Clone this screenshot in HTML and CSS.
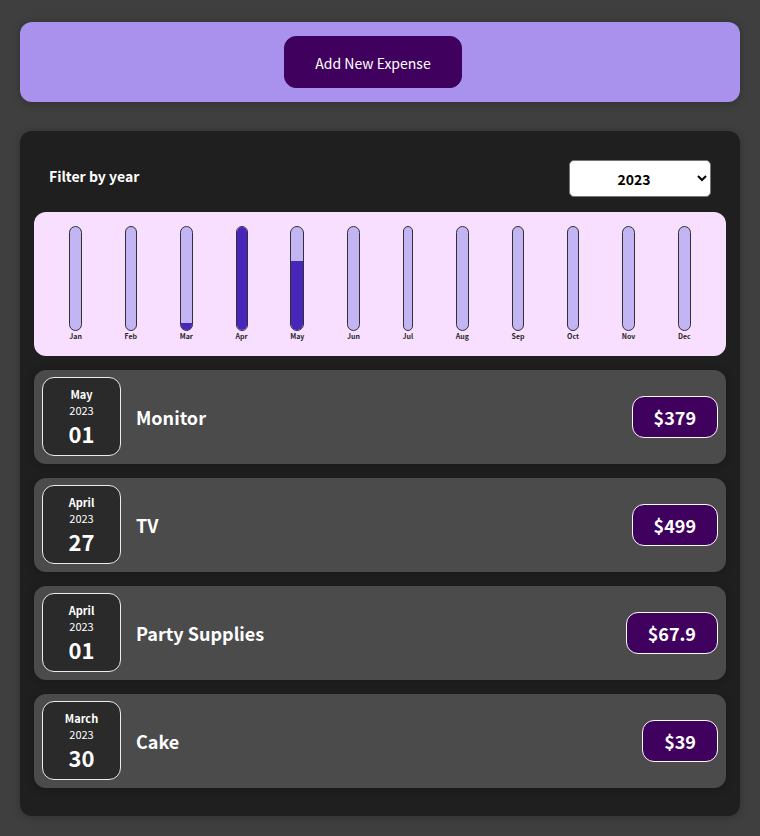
FILE: index.html
```html
<!DOCTYPE html>
<html lang="en">
<head>
<meta charset="utf-8">
<title>Expenses</title>
<link rel="stylesheet" href="styles.css">
</head>
<body>
<section class="new-expense"><button type="button">Add New Expense</button></section>
<main class="expenses">
  <div class="filter">
    <label for="year">Filter by year</label>
    <select id="year"><option>2023</option><option>2022</option><option>2021</option></select>
  </div>
  <div class="chart">
    <div class="chart-bar"><div class="bar"><div class="fill" style="height:0%"></div></div><span>Jan</span></div>
    <div class="chart-bar"><div class="bar"><div class="fill" style="height:0%"></div></div><span>Feb</span></div>
    <div class="chart-bar"><div class="bar"><div class="fill" style="height:7%"></div></div><span>Mar</span></div>
    <div class="chart-bar"><div class="bar"><div class="fill" style="height:100%"></div></div><span>Apr</span></div>
    <div class="chart-bar"><div class="bar"><div class="fill" style="height:67%"></div></div><span>May</span></div>
    <div class="chart-bar"><div class="bar"><div class="fill" style="height:0%"></div></div><span>Jun</span></div>
    <div class="chart-bar"><div class="bar"><div class="fill" style="height:0%"></div></div><span>Jul</span></div>
    <div class="chart-bar"><div class="bar"><div class="fill" style="height:0%"></div></div><span>Aug</span></div>
    <div class="chart-bar"><div class="bar"><div class="fill" style="height:0%"></div></div><span>Sep</span></div>
    <div class="chart-bar"><div class="bar"><div class="fill" style="height:0%"></div></div><span>Oct</span></div>
    <div class="chart-bar"><div class="bar"><div class="fill" style="height:0%"></div></div><span>Nov</span></div>
    <div class="chart-bar"><div class="bar"><div class="fill" style="height:0%"></div></div><span>Dec</span></div>
  </div>
  <ul class="list">
    <li class="item"><div class="date"><span class="month">May</span><span class="year">2023</span><span class="day">01</span></div><h2>Monitor</h2><div class="price">$379</div></li>
    <li class="item"><div class="date"><span class="month">April</span><span class="year">2023</span><span class="day">27</span></div><h2>TV</h2><div class="price">$499</div></li>
    <li class="item"><div class="date"><span class="month">April</span><span class="year">2023</span><span class="day">01</span></div><h2>Party Supplies</h2><div class="price">$67.9</div></li>
    <li class="item"><div class="date"><span class="month">March</span><span class="year">2023</span><span class="day">30</span></div><h2>Cake</h2><div class="price">$39</div></li>
  </ul>
</main>
</body>
</html>
```
FILE: styles.css
```css
* { box-sizing: border-box; }
body {
  margin: 0;
  padding: 22px 20px 20px;
  background: #3f3f3f;
  font-family: "Noto Sans CJK JP", sans-serif;
  color: #fff;
}
.new-expense {
  display: flex;
  justify-content: center;
  padding: 14px;
  margin-bottom: 29px;
  border-radius: 12px;
  background: #a892ee;
  box-shadow: 0 1px 8px rgba(0, 0, 0, 0.25);
}
.new-expense button {
  font: inherit;
  font-size: 14px;
  line-height: 24px;
  color: #fff;
  background: #40005d;
  border: 1px solid #40005d;
  border-radius: 12px;
  margin-right: 14px;
  padding: 14px 30px 12px;
}
.expenses {
  padding: 14px 14px 28px;
  border-radius: 12px;
  background: #1f1f1f;
  box-shadow: 0 1px 8px rgba(0, 0, 0, 0.25);
}
.filter {
  display: flex;
  align-items: flex-start;
  justify-content: space-between;
  padding: 15px;
}
.filter label {
  padding-top: 4px;
  font-size: 14px;
  line-height: 24px;
  font-weight: bold;
}
.filter select {
  font: inherit;
  font-size: 14px;
  font-weight: bold;
  width: 142px;
  height: 37px;
  text-align: center;
  background: #fff;
  color: #000;
  border: 1px solid #767676;
  border-radius: 5px;
}
.chart {
  display: flex;
  justify-content: space-around;
  padding: 14px;
  min-height: 144px;
  border-radius: 12px;
  background: #f8dfff;
}
.chart-bar {
  display: flex;
  flex-direction: column;
  align-items: center;
}
.bar {
  display: flex;
  flex-direction: column;
  justify-content: flex-end;
  width: 100%;
  height: 105px;
  border: 1px solid #313131;
  border-radius: 12px;
  background: #c3b4f3;
  overflow: hidden;
}
.fill { background: #4826b9; }
.chart-bar span {
  font-size: 7px;
  line-height: 11px;
  font-weight: bold;
  color: #1f1f1f;
}
.list {
  list-style: none;
  margin: 14px 0 0;
  padding: 0;
  display: grid;
  gap: 14px;
}
.item {
  display: flex;
  align-items: center;
  padding: 7px 8px 8px;
  border-radius: 12px;
  background: #4b4b4b;
  box-shadow: 0 1px 8px rgba(0, 0, 0, 0.25);
}
.date {
  display: flex;
  flex-direction: column;
  align-items: center;
  justify-content: center;
  width: 79px;
  height: 79px;
  padding-top: 2px;
  border: 1px solid #ececec;
  border-radius: 12px;
  background: #2a2a2a;
}
.month { font-size: 11px; line-height: 16px; font-weight: bold; }
.year { font-size: 11px; line-height: 16px; }
.day { font-size: 22px; line-height: 31px; font-weight: bold; }
.item h2 {
  flex: 1;
  margin: 0 15px;
  font-size: 18px;
  line-height: 30px;
}
.price {
  padding: 5px 21px;
  border: 1px solid #fff;
  border-radius: 12px;
  background: #40005d;
  font-size: 18px;
  line-height: 30px;
  font-weight: bold;
}
```
